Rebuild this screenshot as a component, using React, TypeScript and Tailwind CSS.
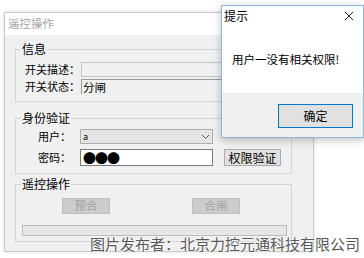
import React from 'react'

const cjk = { fontFamily: '"Noto Sans CJK SC", "Microsoft YaHei", sans-serif' }

function Group({ title, className, children }: { title: string; className: string; children: React.ReactNode }) {
  return (
    <div className={`border border-[#d5d5d5] ${className}`}>
      <div className="-mt-[8px] ml-[5px] w-fit bg-[#f0f0f0] px-[1px] text-[12px] leading-[14px] text-black">{title}</div>
      {children}
    </div>
  )
}

export default function App() {
  return (
    <div className="relative h-[258px] w-[364px] overflow-hidden bg-white" style={cjk}>
      {/* 主窗口 */}
      <div className="absolute left-[4px] top-[12px] flex h-[240px] w-[310px] flex-col border border-[#c9c9c9] bg-[#f0f0f0] shadow-[0_0_4px_rgba(0,0,0,0.12)]">
        <div className="flex h-[22px] items-center bg-white pl-[3px] text-[11.5px] text-[#a6a6a6]">遥控操作</div>

        <div className="flex flex-col pl-[10px] pr-[21px] pt-[14px]">
          <Group title="信息" className="h-[53px]">
            <div className="mt-[6px] flex h-[15px] items-center">
              <div className="w-[64px] text-right text-[11px] leading-[15px]">开关描述：</div>
              <div className="ml-[1px] h-[15px] flex-1 border border-[#c4c4c4] bg-[#f0f0f0]" />
            </div>
            <div className="mt-[2px] flex h-[15px] items-center">
              <div className="w-[64px] text-right text-[11px] leading-[15px]">开关状态：</div>
              <div className="ml-[1px] flex h-[15px] flex-1 items-center border-l border-t border-[#9a9a9a] pl-[1px] text-[11.5px] leading-[14px]">分闸</div>
            </div>
          </Group>

          <Group title="身份验证" className="mt-[16px] h-[56px]">
            <div className="mt-[4px] flex h-[15px] items-center">
              <div className="w-[55px] text-right text-[11px] leading-[15px]">用户：</div>
              <div className="ml-[9px] flex h-[15px] w-[133px] items-center justify-between border border-[#adadad] bg-[#e5e5e5] pl-[2px] pr-[2px] text-[9px] leading-[10px]">
                <span>a</span>
                <svg width="9" height="6" viewBox="0 0 9 6"><path d="M1 1l3.5 3.5L8 1" fill="none" stroke="#555" strokeWidth="1" /></svg>
              </div>
            </div>
            <div className="mt-[5px] flex h-[17px] items-center">
              <div className="w-[55px] text-right text-[11px] leading-[15px]">密码：</div>
              <div className="ml-[9px] flex h-[17px] w-[133px] items-center border border-[#7a7a7a] bg-white pl-[2px] text-[13px] leading-[14px] tracking-[-1px] text-black">●●●</div>
              <div className="ml-[11px] flex h-[17px] w-[57px] items-center justify-center border border-[#adadad] bg-[#e1e1e1] text-[12px] leading-[14px]">权限验证</div>
            </div>
          </Group>

          <Group title="遥控操作" className="mt-[10px] h-[58px]">
            <div className="mt-[7px] flex h-[16px]">
              <div className="ml-[46px] flex h-[16px] w-[48px] items-center justify-center border border-[#bfbfbf] bg-[#cccccc] text-[11.5px] text-[#a3a3a3]">预合</div>
              <div className="ml-[82px] flex h-[16px] w-[48px] items-center justify-center border border-[#bfbfbf] bg-[#cccccc] text-[11.5px] text-[#a3a3a3]">合闸</div>
            </div>
            <div className="ml-[6px] mt-[11px] h-[11px] w-[265px] border border-[#bcbcbc] bg-[#e6e6e6]" />
          </Group>
        </div>
      </div>

      {/* 提示对话框 */}
      <div className="absolute left-[221px] top-[5px] flex h-[133px] w-[143px] flex-col border border-[#8fb8e0] bg-white shadow-[0_2px_8px_rgba(0,0,0,0.25)]">
        <div className="flex h-[20px] items-center justify-between pl-[2px] pr-[9px]">
          <span className="text-[12px] leading-[14px]">提示</span>
          <svg width="10" height="10" viewBox="0 0 10 10"><path d="M1 1l8 8M9 1l-8 8" stroke="#222" strokeWidth="1" /></svg>
        </div>
        <div className="h-[67px] pl-[10px] pt-[26px] text-[11.5px] leading-[14px]">用户一没有相关权限!</div>
        <div className="flex flex-1 justify-end bg-[#f0f0f0] pr-[10px] pt-[11px]">
          <div className="flex h-[24px] w-[75px] items-center justify-center border border-[#0078d7] bg-[#e1e1e1] text-[12px]">确定</div>
        </div>
      </div>

      {/* 水印 */}
      <div className="absolute left-[90px] top-[234px] whitespace-nowrap text-[15px] leading-[20px] text-[#595959] [text-shadow:0_0_2px_#fff,0_0_2px_#fff]">
        图片发布者：北京力控元通科技有限公司
      </div>
    </div>
  )
}
